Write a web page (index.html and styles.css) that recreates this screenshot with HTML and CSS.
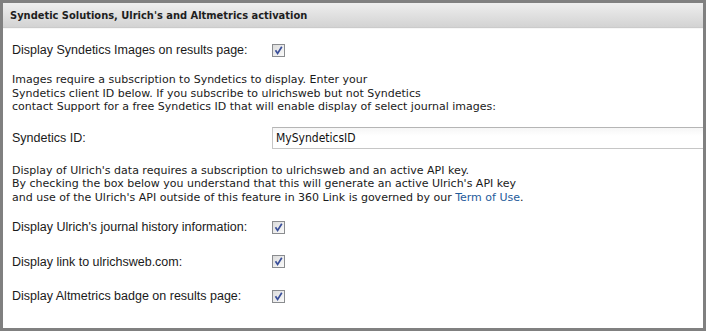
FILE: index.html
```html
<!DOCTYPE html>
<html>
<head>
    <title>Syndetic Solutions, Ulrich's and Altmetrics activation</title>
    <link rel="stylesheet" href="styles.css">
</head>
<body>
<div class="panel">
    <div class="panel-header">Syndetic Solutions, Ulrich's and Altmetrics activation</div>
    <div class="panel-body">
        <div class="form-row row-first">
            <label class="form-label">Display Syndetics Images on results page:</label>
            <span class="check">
                <svg width="11" height="11" viewBox="0 0 11 11"><path d="M2.5 5.2 L4.6 8.4 L8.8 1.8" fill="none" stroke="#3a4f9a" stroke-width="1.7"/></svg>
            </span>
        </div>

        <p class="note note-first">
            Images require a subscription to Syndetics to display. Enter your<br>
            Syndetics client ID below. If you subscribe to ulrichsweb but not Syndetics<br>
            contact Support for a free Syndetics ID that will enable display of select journal images:
        </p>

        <div class="form-row row-input">
            <label class="form-label" for="syndetics-id">Syndetics ID:</label>
            <input type="text" id="syndetics-id" class="text-input" value="MySyndeticsID">
        </div>

        <p class="note note-second">
            Display of Ulrich's data requires a subscription to ulrichsweb and an active API key.<br>
            By checking the box below you understand that this will generate an active Ulrich's API key<br>
            and use of the Ulrich's API outside of this feature in 360 Link is governed by our <a href="#" class="terms">Term of Use</a>.
        </p>

        <div class="form-row row-ulrich">
            <label class="form-label">Display Ulrich's journal history information:</label>
            <span class="check">
                <svg width="11" height="11" viewBox="0 0 11 11"><path d="M2.5 5.2 L4.6 8.4 L8.8 1.8" fill="none" stroke="#3a4f9a" stroke-width="1.7"/></svg>
            </span>
        </div>

        <div class="form-row row-spaced">
            <label class="form-label">Display link to ulrichsweb.com:</label>
            <span class="check">
                <svg width="11" height="11" viewBox="0 0 11 11"><path d="M2.5 5.2 L4.6 8.4 L8.8 1.8" fill="none" stroke="#3a4f9a" stroke-width="1.7"/></svg>
            </span>
        </div>

        <div class="form-row row-spaced">
            <label class="form-label">Display Altmetrics badge on results page:</label>
            <span class="check">
                <svg width="11" height="11" viewBox="0 0 11 11"><path d="M2.5 5.2 L4.6 8.4 L8.8 1.8" fill="none" stroke="#3a4f9a" stroke-width="1.7"/></svg>
            </span>
        </div>
    </div>
</div>
</body>
</html>
```

FILE: styles.css
```css
html, body {
    margin: 0;
    padding: 0;
}

body {
    background-color: #808080;
    font-family: "Liberation Sans", Arial, sans-serif;
    color: #1a1a1a;
}

.panel {
    width: 700px;
    height: 325px;
    margin: 3px;
    background-color: #fff;
    overflow: hidden;
}

.panel-header {
    height: 24px;
    line-height: 25px;
    padding-left: 7px;
    font-family: "DejaVu Sans", sans-serif;
    font-stretch: condensed;
    font-weight: bold;
    font-size: 11px;
    color: #1e1e1e;
    background: linear-gradient(#eeeeee, #d3d3d3);
    border-bottom: 1px solid #cbcbcb;
}

.panel-body {
    padding-left: 9px;
    border-top: 1px solid #f7f7f7;
}

.form-row {
    display: flex;
    align-items: center;
    height: 20px;
}

.form-label {
    width: 260px;
    font-size: 12.5px;
    flex-shrink: 0;
}

.row-first {
    margin-top: 11px;
}

.row-input {
    height: 22px;
    margin-top: 13px;
}

.row-ulrich {
    margin-top: 13px;
}

.row-spaced {
    margin-top: 14.5px;
}

.check {
    width: 11px;
    height: 11px;
    border: 1px solid #8a8c8f;
    background: linear-gradient(135deg, #dcdcdc, #fafafa);
    display: flex;
    align-items: center;
    justify-content: center;
}

.note {
    margin: 13px 0 0 0;
    font-family: "DejaVu Sans", sans-serif;
    font-size: 11px;
    line-height: 13.5px;
    color: #1a1a1a;
}

.note-second {
    margin-top: 15px;
}

.terms {
    color: #1f5b9b;
    text-decoration: none;
}

.text-input {
    width: 460px;
    height: 22px;
    flex-shrink: 0;
    box-sizing: border-box;
    padding: 0 3px;
    border: 1px solid #c6c6c6;
    border-top-color: #b5b5b5;
    background: linear-gradient(#f6f6f6, #ffffff 40%);
    font-family: "DejaVu Sans", sans-serif;
    font-stretch: condensed;
    font-size: 12px;
    color: #111;
}
```
